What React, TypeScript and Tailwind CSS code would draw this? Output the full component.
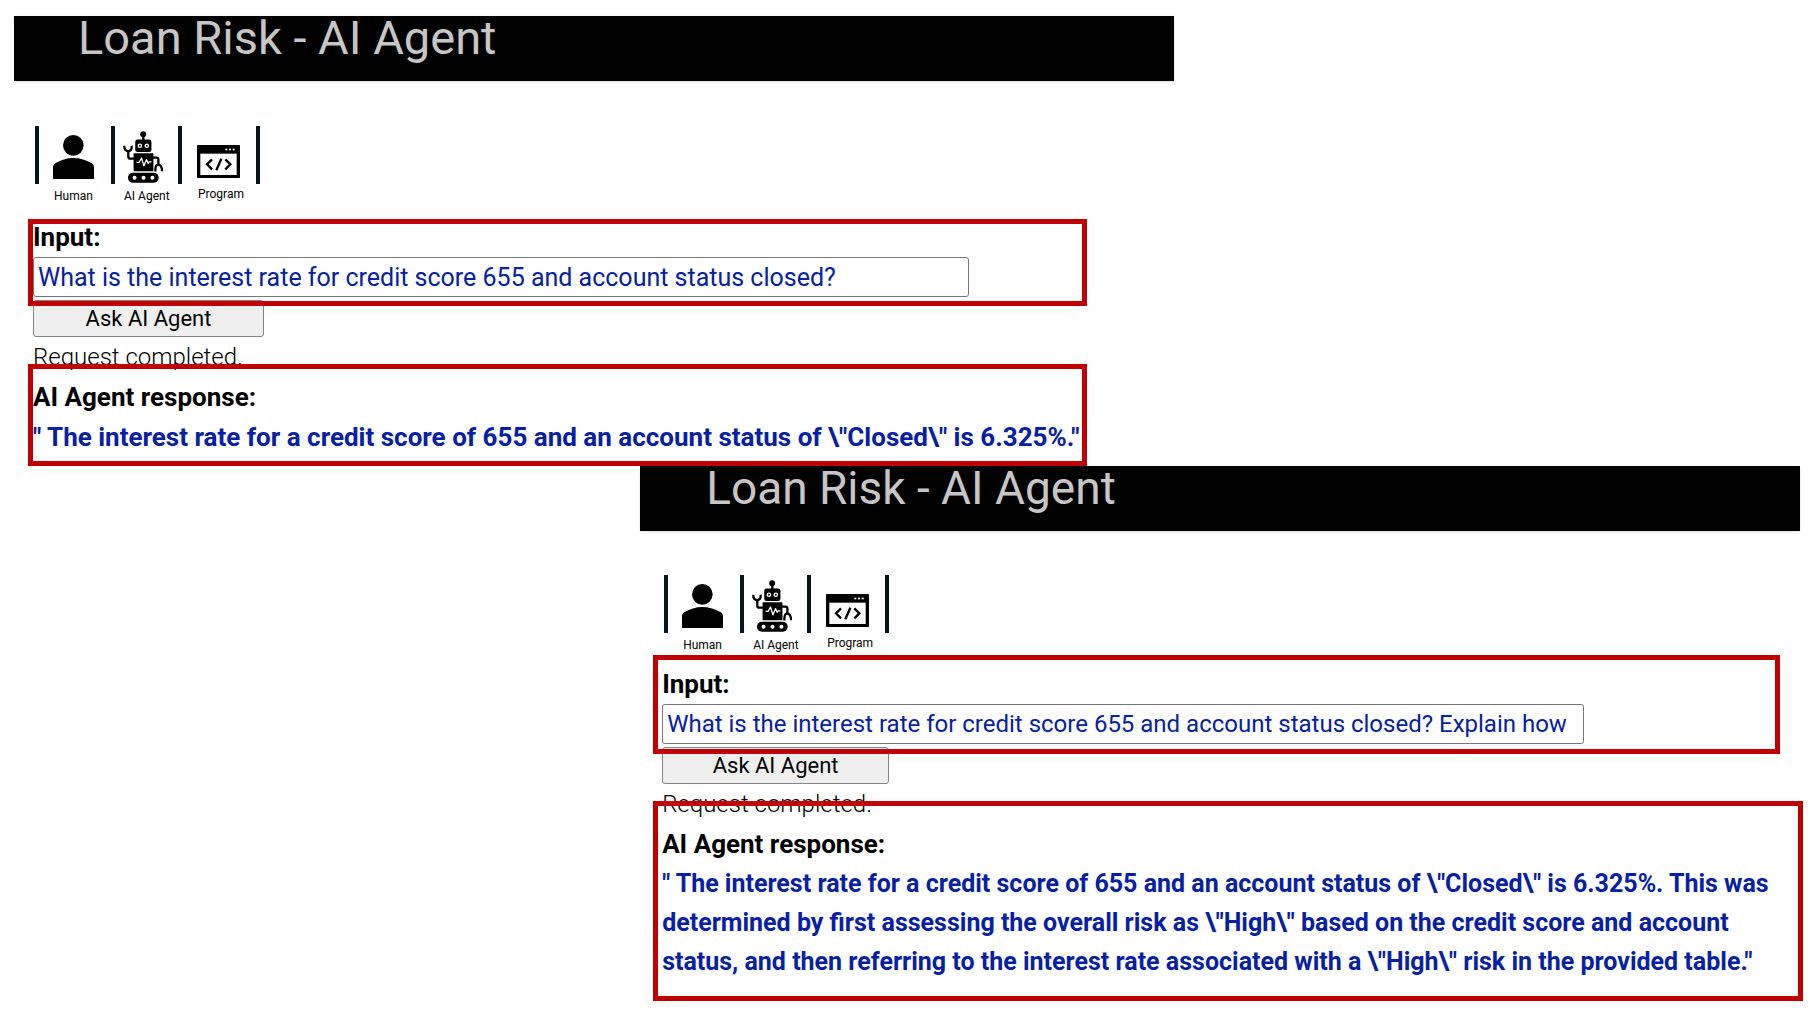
import { useId, type ReactNode } from "react";

function HumanIcon() {
  return (
    <svg viewBox="0 0 123 132" className="h-11 w-[41px]" aria-hidden="true">
      <circle cx="61" cy="31" r="31" />
      <path d="M0 132V98c0-7 3-11 8-14 16-9 33-15 53-15s38 6 54 15c5 3 8 7 8 14v34z" />
    </svg>
  );
}

function RobotIcon() {
  return (
    <svg viewBox="0 0 121 156" className="h-[52px] w-10" aria-hidden="true">
      <circle cx="61" cy="9" r="9" />
      <rect x="58" y="12" width="7" height="16" />
      <rect x="37" y="25" width="49" height="38" rx="7" />
      <g fill="#fff">
        <circle cx="51" cy="44" r="7" />
        <circle cx="72" cy="44" r="7" />
      </g>
      <circle cx="51" cy="44" r="3" />
      <circle cx="72" cy="44" r="3" />
      <rect x="32" y="67" width="60" height="54" rx="1" />
      <path d="M41 94h8l7-13 7 24 8-19 5 11 3-4h7" fill="none" stroke="#fff" strokeWidth="4" strokeLinejoin="round" />
      <g fill="none" stroke="#000" strokeWidth="7">
        <path d="M35 83H22q-6 0-6-6V60" />
        <path d="M91 80h10q6 0 6 6v16" />
        <path d="M4 44v3q0 13 12 13t10-16" />
        <path d="M98 122v-8q1-13 9-13t11 14v6" />
      </g>
      <rect x="15" y="126" width="93" height="30" rx="15" />
      <g fill="#fff">
        <circle cx="35" cy="141" r="6" />
        <circle cx="62" cy="141" r="6" />
        <circle cx="89" cy="141" r="6" />
      </g>
    </svg>
  );
}

function ProgramIcon() {
  return (
    <svg viewBox="0 0 129 99" className="h-[33px] w-[43px]" aria-hidden="true">
      <rect width="129" height="99" rx="2" />
      <rect x="10" y="26" width="109" height="64" fill="#fff" />
      <g fill="#fff">
        <rect x="85" y="11" width="6" height="5" />
        <rect x="96" y="11" width="6" height="5" />
        <rect x="107" y="11" width="6" height="5" />
      </g>
      <path d="M45 43L30 58l15 15M85 43l15 15-15 15M73 41L58 76" fill="none" stroke="#000" strokeWidth="7" />
    </svg>
  );
}

function Role({ icon, label, className }: { icon: ReactNode; label: string; className: string }) {
  return (
    <li className={`flex flex-col ${className}`}>
      {icon}
      <span className="pl-px text-xs leading-4">{label}</span>
    </li>
  );
}

function Bar() {
  return <li role="presentation" className="h-[58px] w-1 bg-[#06141c]" />;
}

function Roles() {
  return (
    <ul className="flex pl-0.5">
      <Bar />
      <Role className="w-[72px] gap-[9px] pl-3.5 pt-[9px]" icon={<HumanIcon />} label="Human" />
      <Bar />
      <Role className="w-[63px] gap-[5px] pl-2 pt-[5px]" icon={<RobotIcon />} label="AI Agent" />
      <Bar />
      <Role className="w-[74px] gap-2 pl-[15px] pt-[19px]" icon={<ProgramIcon />} label="Program" />
      <Bar />
    </ul>
  );
}

function Highlight({ className }: { className: string }) {
  return <div className={`pointer-events-none absolute border-[5px] border-[#c00000] ${className}`} />;
}

type PanelProps = {
  question: string;
  answer: string;
  className: string;
  titleClass: string;
  bodyClass: string;
  rolesClass: string;
  inputClass: string;
  buttonClass: string;
  answerClass: string;
  inputFrame: string;
  answerFrame: string;
};

function Panel(p: PanelProps) {
  const id = useId();
  return (
    <section className={`w-[63.8%] ${p.className}`}>
      <header className="h-[65px] bg-black shadow-sm">
        <h1 className={`leading-[44px] text-[#c6c6c6] ${p.titleClass}`}>Loan Risk - AI Agent</h1>
      </header>
      <div className={p.bodyClass}>
        <div className={p.rolesClass}>
          <Roles />
        </div>
        <div className="relative">
          <label htmlFor={id} className="block text-[26px] font-bold leading-10">
            Input:
          </label>
          <input
            id={id}
            type="text"
            defaultValue={p.question}
            className={`block h-10 rounded-[3px] border border-[#767676] bg-white px-1 text-[#0520a5] ${p.inputClass}`}
          />
          <Highlight className={p.inputFrame} />
        </div>
        <button
          type="button"
          className={`mt-[3px] block h-[37px] rounded-[3px] border border-[#858585] bg-[#efefef] text-[22px] leading-8 ${p.buttonClass}`}
        >
          Ask AI Agent
        </button>
        <p className="text-2xl font-light leading-10">Request completed.</p>
        <div className="relative font-bold">
          <h2 className="text-[26px] leading-10">AI Agent response:</h2>
          <p className={`text-[#0520a5] ${p.answerClass}`}>{p.answer}</p>
          <Highlight className={p.answerFrame} />
        </div>
      </div>
    </section>
  );
}

export default function App() {
  return (
    <main className="min-h-screen overflow-x-hidden bg-white pt-4 font-['Roboto',sans-serif] text-black">
      <Panel
        question="What is the interest rate for credit score 655 and account status closed?"
        answer={'" The interest rate for a credit score of 655 and an account status of \\"Closed\\" is 6.325%."'}
        className="ml-3.5"
        titleClass="pl-16 text-[47px]"
        bodyClass="pl-[19px] pb-[9px]"
        rolesClass="h-[136px] pt-[45px]"
        inputClass="w-[82%] text-[25px]"
        buttonClass="w-[231px]"
        answerClass="text-[26px] leading-10"
        inputFrame="-left-[5px] right-[87px] top-[2px] -bottom-[9px]"
        answerFrame="-left-[5px] right-[87px] -top-[13px] -bottom-[9px]"
      />
      <Panel
        question="What is the interest rate for credit score 655 and account status closed? Explain how"
        answer={
          '" The interest rate for a credit score of 655 and an account status of \\"Closed\\" is 6.325%. This was determined by first assessing the overall risk as \\"High\\" based on the credit score and account status, and then referring to the interest rate associated with a \\"High\\" risk in the provided table."'
        }
        className="ml-auto mr-[18px]"
        titleClass="pl-[66px] text-[46px]"
        bodyClass="pl-[22px]"
        rolesClass="h-[133px] pt-11"
        inputClass="w-[81%] text-2xl"
        buttonClass="w-[227px]"
        answerClass="text-[25px] leading-[39px]"
        inputFrame="-left-[9px] right-5 -top-[9px] -bottom-[10px]"
        answerFrame="-left-[9px] -right-[3px] -top-[23px] -bottom-[20px]"
      />
    </main>
  );
}
